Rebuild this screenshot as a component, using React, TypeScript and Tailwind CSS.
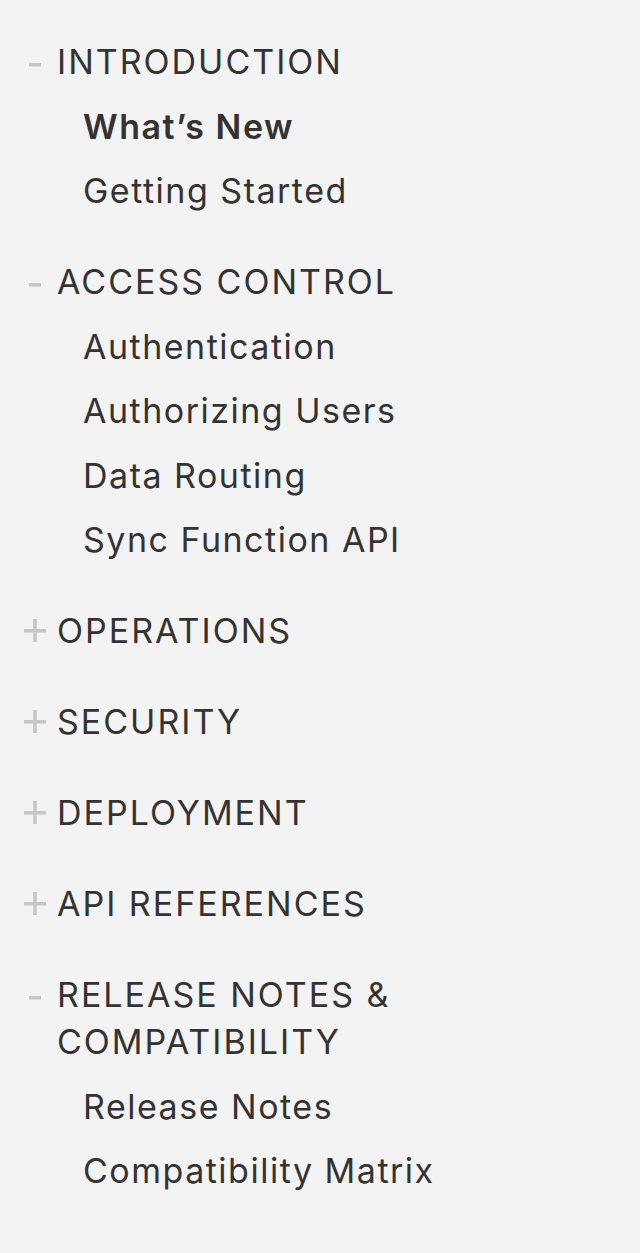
import React from "react";

type Section = {
  title: string[];
  open: boolean;
  items: { label: string; active?: boolean }[];
};

const sections: Section[] = [
  {
    title: ["INTRODUCTION"],
    open: true,
    items: [{ label: "What’s New", active: true }, { label: "Getting Started" }],
  },
  {
    title: ["ACCESS CONTROL"],
    open: true,
    items: [
      { label: "Authentication" },
      { label: "Authorizing Users" },
      { label: "Data Routing" },
      { label: "Sync Function API" },
    ],
  },
  { title: ["OPERATIONS"], open: false, items: [] },
  { title: ["SECURITY"], open: false, items: [] },
  { title: ["DEPLOYMENT"], open: false, items: [] },
  { title: ["API REFERENCES"], open: false, items: [] },
  {
    title: ["RELEASE NOTES &", "COMPATIBILITY"],
    open: true,
    items: [{ label: "Release Notes" }, { label: "Compatibility Matrix" }],
  },
];

function Marker({ open }: { open: boolean }) {
  // drawn glyphs: short grey dash when expanded, plus when collapsed
  return (
    <svg width="33" height="47" viewBox="0 0 33 47" className="shrink-0">
      {open ? (
        <rect x="5" y="25" width="12" height="3.5" fill="#c6c6c6" />
      ) : (
        <g fill="#c6c6c6">
          <rect x="0" y="22" width="22" height="3.5" />
          <rect x="9.25" y="12" width="3.5" height="23" />
        </g>
      )}
    </svg>
  );
}

export default function App() {
  return (
    <div className="min-h-screen bg-[#f3f3f3] pl-[24px] pt-[29px] font-['Inter',sans-serif] text-[34px] text-[#333333]">
      <nav className="flex flex-col gap-[26px]">
        {sections.map((s) => (
          <div key={s.title.join(" ")}>
            <div className="flex items-start py-[9px]">
              <Marker open={s.open} />
              <div className="leading-[47px] tracking-[2px]">
                {s.title.map((line) => (
                  <div key={line}>{line}</div>
                ))}
              </div>
            </div>
            {s.items.map((it) => (
              <div
                key={it.label}
                className={`pl-[59px] py-[8.75px] leading-[47px] tracking-[1.5px] ${it.active ? "font-semibold" : ""}`}
              >
                {it.label}
              </div>
            ))}
          </div>
        ))}
      </nav>
    </div>
  );
}
